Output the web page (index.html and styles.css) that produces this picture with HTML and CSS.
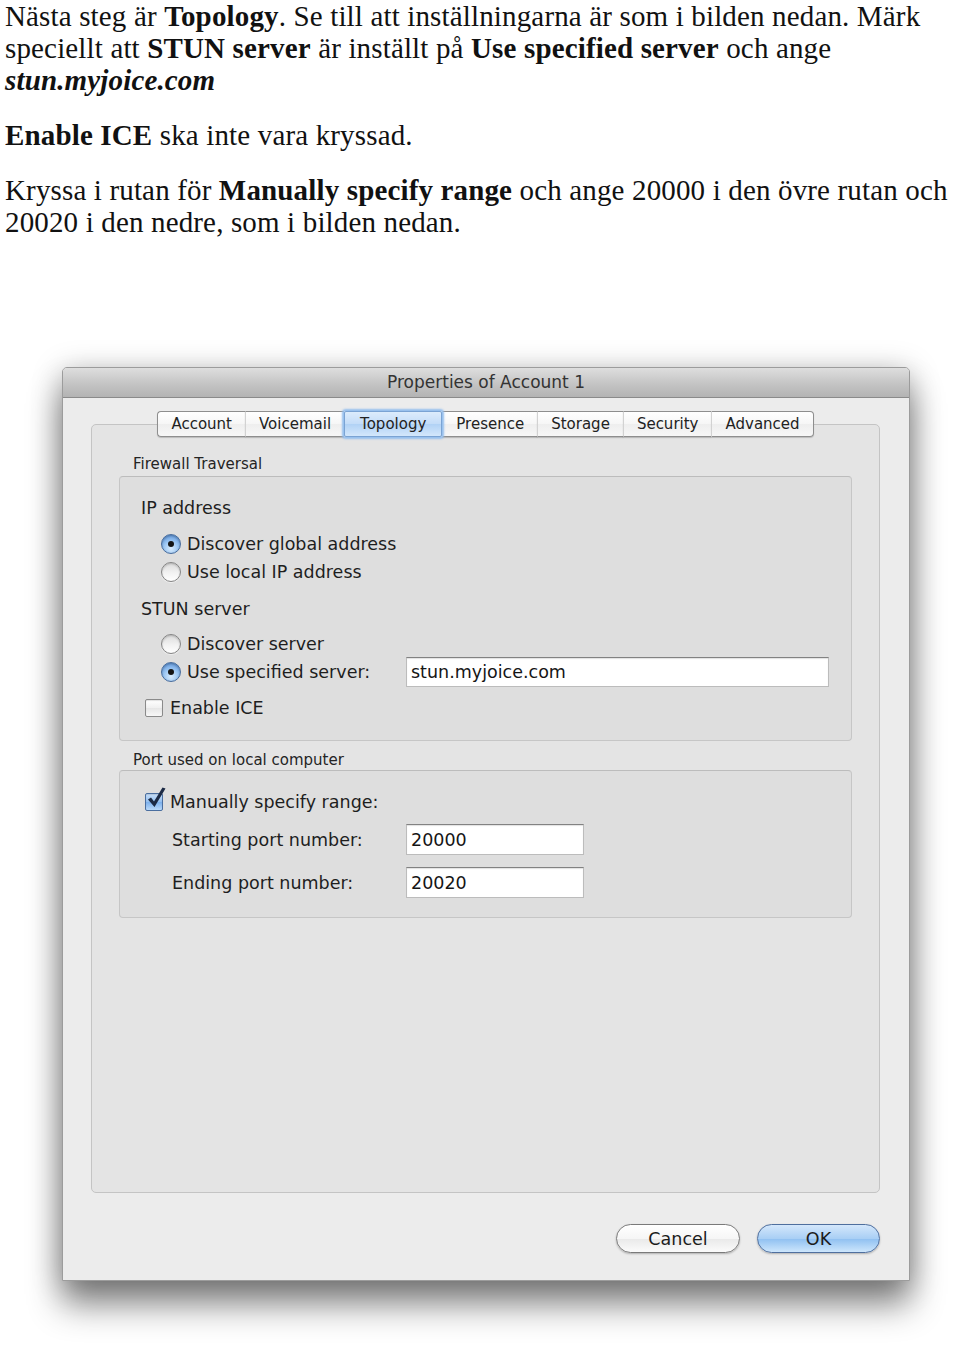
FILE: index.html
```html
<!DOCTYPE html>
<html lang="sv">
<head>
<meta charset="utf-8">
<title>Topology</title>
<link rel="stylesheet" href="styles.css">
</head>
<body>
<div class="doc">
  <p class="para">Nästa steg är <b>Topology</b>. Se till att inställningarna är som i bilden nedan. Märk<br>speciellt att <b>STUN server</b> är inställt på <b>Use specified server</b> och ange<br><b><i>stun.myjoice.com</i></b></p>
  <p class="para"><b>Enable ICE</b> ska inte vara kryssad.</p>
  <p class="para">Kryssa i rutan för <b>Manually specify range</b> och ange 20000 i den övre rutan och<br>20020 i den nedre, som i bilden nedan.</p>
</div>
<div class="stage">
  <div class="window">
    <div class="titlebar">Properties of Account 1</div>
    <div class="wbody">
      <div class="tabs">
        <span class="tab first">Account</span>
        <span class="tab">Voicemail</span>
        <span class="tab selected">Topology</span>
        <span class="tab after-sel">Presence</span>
        <span class="tab">Storage</span>
        <span class="tab">Security</span>
        <span class="tab last">Advanced</span>
      </div>
      <div class="group">
        <div class="glabel">Firewall Traversal</div>
        <div class="box box1">
          <div class="row head">IP address</div>
          <div class="row opt r-first"><span class="radio on"></span><span class="lbl">Discover global address</span></div>
          <div class="row opt"><span class="radio"></span><span class="lbl">Use local IP address</span></div>
          <div class="row head stun">STUN server</div>
          <div class="row opt disc"><span class="radio"></span><span class="lbl">Discover server</span></div>
          <div class="row opt spec"><span class="radio on"></span><span class="lbl wide">Use specified server:</span><span class="field server">stun.myjoice.com</span></div>
          <div class="row chk ice"><span class="checkbox"></span><span class="lbl">Enable ICE</span></div>
        </div>
        <div class="glabel second">Port used on local computer</div>
        <div class="box box2">
          <div class="row chk"><span class="checkbox on"><svg class="tick" width="22" height="24" viewBox="0 0 22 24"><path d="M3 13.5 L6 11.5 L9 15.5 L17.5 1.5 L20.5 2.5 L9.5 21 Z" fill="#1c2a44"/></svg></span><span class="lbl">Manually specify range:</span></div>
          <div class="row port first-port"><span class="lbl plabel">Starting port number:</span><span class="field num">20000</span></div>
          <div class="row port second-port"><span class="lbl plabel">Ending port number:</span><span class="field num">20020</span></div>
        </div>
      </div>
      <div class="buttons">
        <span class="btn cancel">Cancel</span>
        <span class="btn ok">OK</span>
      </div>
    </div>
  </div>
</div>
</body>
</html>
```
FILE: styles.css
```css
html, body {
  margin: 0;
  padding: 0;
  background: #ffffff;
}

.doc {
  padding-left: 5px;
  font-family: "Liberation Serif", "DejaVu Serif", serif;
  font-size: 29px;
  letter-spacing: 0.15px;
  line-height: 32px;
  color: #111111;
  white-space: nowrap;
}

.para {
  margin: 0 0 23px 0;
}

.para:last-child {
  margin-bottom: 0;
}

.stage {
  padding-top: 129px;
  padding-bottom: 80px;
}

.window {
  margin-left: 62px;
  width: 848px;
  box-sizing: border-box;
  border: 1px solid #9c9c9c;
  border-radius: 5px 5px 0 0;
  background: #ececec;
  box-shadow: 0 24px 34px rgba(0, 0, 0, 0.45), 0 4px 30px rgba(0, 0, 0, 0.26);
  font-family: "DejaVu Sans", "Noto Sans", sans-serif;
  color: #1e1e1e;
}

.titlebar {
  height: 30px;
  box-sizing: border-box;
  border-bottom: 1px solid #8a8a8a;
  border-radius: 4px 4px 0 0;
  background: linear-gradient(#dedede, #c4c4c4 55%, #b3b3b3);
  text-align: center;
  font-size: 17px;
  line-height: 29px;
  color: #333333;
}

.wbody {
  padding: 13px 29px 27px 28px;
}

.tabs {
  position: relative;
  z-index: 1;
  display: flex;
  justify-content: center;
  height: 26px;
}

.tab {
  display: flex;
  align-items: center;
  padding: 0 13px;
  box-sizing: border-box;
  height: 26px;
  font-size: 15px;
  color: #222222;
  border-top: 1px solid #8e8e8e;
  border-bottom: 1px solid #8e8e8e;
  border-left: 1px solid #d2d2d2;
  background: linear-gradient(#ffffff, #f6f6f6 50%, #eeeeee 51%, #f7f7f7);
  box-shadow: 0 1px 1px rgba(0, 0, 0, 0.18);
}

.tab.first {
  border-left: 1px solid #8e8e8e;
  border-radius: 4px 0 0 4px;
}

.tab.last {
  border-right: 1px solid #8e8e8e;
  border-radius: 0 4px 4px 0;
}

.tab.selected {
  position: relative;
  z-index: 2;
  padding: 0 15px;
  border: 1px solid #7aa3d3;
  border-radius: 2px;
  background: linear-gradient(#dcecfc, #c3dcf8 50%, #b1d2f5 51%, #d3e7fb);
  box-shadow: 0 0 2px 2px #95bfee;
}

.tab.after-sel {
  border-left-color: transparent;
}

.group {
  margin-top: -13px;
  height: 769px;
  box-sizing: border-box;
  border: 1px solid #c4c4c4;
  border-radius: 5px;
  background: #e4e4e4;
  padding: 30px 27px 0 27px;
}

.glabel {
  height: 18px;
  line-height: 18px;
  font-size: 15px;
  padding-left: 14px;
  color: #242424;
}

.glabel.second {
  margin-top: 10px;
}

.box {
  border: 1px solid #c6c6c6;
  border-top-color: #bcbcbc;
  border-radius: 4px;
  background: #dedede;
}

.box1 {
  margin-top: 3px;
  padding: 19px 0 18px 0;
}

.box2 {
  margin-top: 1px;
  padding: 17px 0 19px 0;
}

.row {
  display: flex;
  align-items: center;
  font-size: 17.5px;
  color: #1e1e1e;
}

.row.head {
  height: 24px;
  padding-left: 21px;
}

.row.head.stun {
  margin-top: 11px;
}

.row.opt {
  height: 28px;
  padding-left: 41px;
}

.row.opt.r-first {
  margin-top: 10px;
}

.row.opt.disc {
  margin-top: 9px;
  height: 27px;
}

.row.opt.spec {
  height: 30px;
}

.row.chk {
  height: 28px;
  padding-left: 25px;
}

.row.chk.ice {
  margin-top: 7px;
}

.row.port {
  height: 31px;
  padding-left: 52px;
}

.row.port.first-port {
  margin-top: 8px;
}

.row.port.second-port {
  margin-top: 12px;
}

.lbl {
  white-space: nowrap;
}

.lbl.wide {
  width: 219px;
  flex: none;
}

.lbl.plabel {
  width: 234px;
  flex: none;
}

.radio {
  position: relative;
  flex: none;
  width: 20px;
  height: 20px;
  box-sizing: border-box;
  margin-right: 6px;
  border-radius: 50%;
  border: 1px solid #858585;
  background: linear-gradient(#dcdcdc, #f2f2f2 55%, #ffffff);
  box-shadow: inset 0 1px 2px rgba(0, 0, 0, 0.2), 0 1px 1px rgba(255, 255, 255, 0.6);
}

.radio.on {
  border-color: #476c9c;
  background: radial-gradient(circle at 50% 75%, #d9ecfd 0, #9bc6f3 45%, #5b93d9 90%);
  box-shadow: inset 0 1px 2px rgba(0, 0, 0, 0.25);
}

.radio.on::after {
  content: "";
  position: absolute;
  left: 6px;
  top: 6px;
  width: 6px;
  height: 6px;
  border-radius: 50%;
  background: #151515;
}

.checkbox {
  position: relative;
  flex: none;
  width: 18px;
  height: 18px;
  box-sizing: border-box;
  margin-right: 7px;
  border: 1px solid #8a8a8a;
  border-radius: 2px;
  background: linear-gradient(#ffffff, #f0f0f0 50%, #e6e6e6 51%, #f7f7f7);
  box-shadow: inset 0 1px 1px rgba(0, 0, 0, 0.12);
}

.checkbox.on {
  border-color: #4a6e9f;
  background: linear-gradient(#c9e0f9, #93bff0 50%, #7cb0ec 51%, #b9d9fa);
}

.tick {
  position: absolute;
  left: -1px;
  top: -8px;
}

.field {
  flex: none;
  height: 100%;
  box-sizing: border-box;
  display: flex;
  align-items: center;
  padding-left: 4px;
  background: #ffffff;
  border: 1px solid #bcbcbc;
  border-top-color: #828282;
  box-shadow: inset 0 1px 1px rgba(0, 0, 0, 0.12);
  font-size: 17.5px;
  color: #151515;
}

.field.server {
  width: 423px;
}

.field.num {
  width: 178px;
}

.buttons {
  margin-top: 31px;
  display: flex;
  justify-content: flex-end;
  gap: 17px;
  height: 29px;
}

.btn {
  display: flex;
  align-items: center;
  justify-content: center;
  height: 29px;
  box-sizing: border-box;
  border-radius: 15px;
  font-size: 17.5px;
  color: #1c1c1c;
  box-shadow: 0 1px 2px rgba(0, 0, 0, 0.25);
}

.btn.cancel {
  width: 124px;
  border: 1px solid #7a7a7a;
  background: linear-gradient(#ffffff, #f6f6f6 50%, #e9e9e9 51%, #fbfbfb);
}

.btn.ok {
  width: 123px;
  border: 1px solid #4f6f9e;
  background: linear-gradient(#d4e7fb, #a9cff5 50%, #8fc0f1 51%, #cde6fc);
}
```
